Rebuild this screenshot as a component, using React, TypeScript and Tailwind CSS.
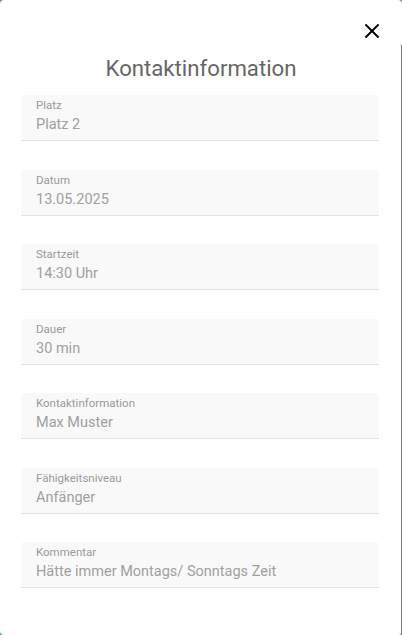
import { X } from 'lucide-react';

const fields = [
  { label: 'Platz', value: 'Platz 2' },
  { label: 'Datum', value: '13.05.2025' },
  { label: 'Startzeit', value: '14:30 Uhr' },
  { label: 'Dauer', value: '30 min' },
  { label: 'Kontaktinformation', value: 'Max Muster' },
  { label: 'Fähigkeitsniveau', value: 'Anfänger' },
  { label: 'Kommentar', value: 'Hätte immer Montags/ Sonntags Zeit' },
];

export default function App() {
  return (
    <div className="h-[635px] w-[402px] bg-[#43a047] font-['Roboto',sans-serif] overflow-hidden">
      <div className="relative h-full w-full rounded-[4px] bg-white">
        <div className="flex justify-end pt-[19px] pr-[18px]">
          <button className="text-black">
            <X className="w-6 h-6" strokeWidth={1.9} />
          </button>
        </div>
        <h2 className="mt-[11px] text-center text-[22.2px] leading-[28px] text-[#666666]">Kontaktinformation</h2>
        <div className="mt-[13px] flex flex-col gap-[28.5px] pl-[21px] pr-[23px]">
          {fields.map((f) => (
            <Field key={f.label} label={f.label} value={f.value} />
          ))}
        </div>
        <div className="absolute right-0 top-[45px] bottom-0 w-px bg-[#7a7a7a]" />
      </div>
    </div>
  );
}

function Field({ label, value }: { label: string; value: string }) {
  return (
    <div className="h-[46px] rounded-t-[4px] bg-[#f9f9f9] border-b border-[#e3e3e3] px-[15px] pt-[3px]">
      <p className="text-[11.5px] leading-[14px] text-[#9a9a9a]">{label}</p>
      <p className="mt-[3px] text-[14.5px] leading-[20px] text-[#a0a0a0]">{value}</p>
    </div>
  );
}
